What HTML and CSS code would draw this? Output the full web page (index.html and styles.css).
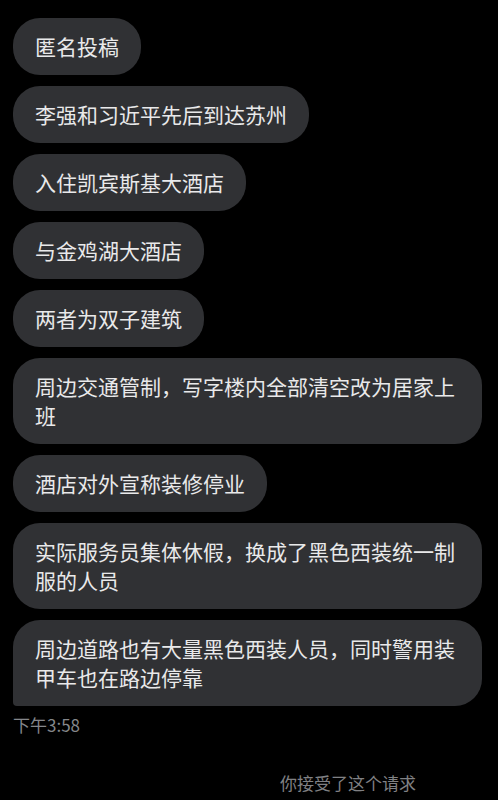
FILE: index.html
```html
<!DOCTYPE html>
<html lang="zh-CN">
<head>
  <meta charset="UTF-8">
  <title>聊天记录</title>
  <meta name="viewport" content="width=device-width, initial-scale=1">
  <link rel="stylesheet" href="styles.css">
</head>
<body>
  <div class="thread">
    <div class="bubble">匿名投稿</div>
    <div class="bubble">李强和习近平先后到达苏州</div>
    <div class="bubble">入住凯宾斯基大酒店</div>
    <div class="bubble">与金鸡湖大酒店</div>
    <div class="bubble">两者为双子建筑</div>
    <div class="bubble">周边交通管制，写字楼内全部清空改为居家上班</div>
    <div class="bubble">酒店对外宣称装修停业</div>
    <div class="bubble">实际服务员集体休假，换成了黑色西装统一制服的人员</div>
    <div class="bubble last">周边道路也有大量黑色西装人员，同时警用装甲车也在路边停靠</div>
    <div class="timestamp">下午3:58</div>
  </div>
  <div class="notice">你接受了这个请求</div>
</body>
</html>
```

FILE: styles.css
```css
body {
  margin: 0;
  background: #000;
  font-family: "Noto Sans CJK SC", "Microsoft YaHei", sans-serif;
  color: #e9e9ea;
}
.thread {
  display: flex;
  flex-direction: column;
  align-items: flex-start;
  gap: 11px;
  padding: 18px 13px 0;
}
.bubble {
  box-sizing: border-box;
  max-width: 469px;
  background: #303134;
  border-radius: 27px;
  padding: 14px 22px;
  font-size: 21px;
  line-height: 29px;
}
.bubble.last {
  border-bottom-left-radius: 4px;
}
.timestamp {
  margin-top: -2px;
  font-size: 17px;
  line-height: 20px;
  color: #85878b;
}
/* system line at the bottom */
.notice {
  margin-top: 37px;
  padding-left: 280px;
  font-size: 17px;
  line-height: 22px;
  color: #808184;
}
```
